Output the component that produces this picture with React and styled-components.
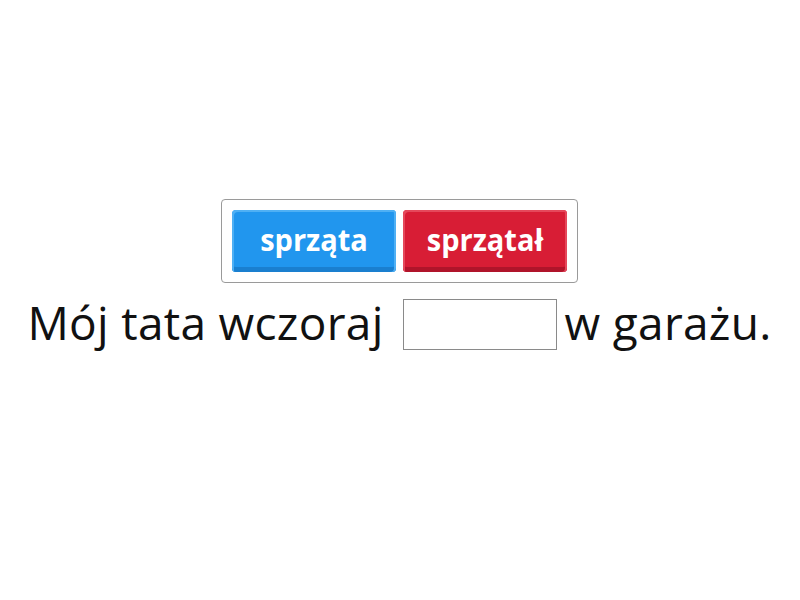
import React from "react";
import styled, { createGlobalStyle } from "styled-components";

const Global = createGlobalStyle`
  html, body { margin: 0; padding: 0; background: #fff; }
  body { font-family: "Open Sans", "Noto Sans", sans-serif; }
`;

const Page = styled.div`
  width: 800px;
  height: 600px;
  display: flex;
  flex-direction: column;
  align-items: center;
  padding-top: 199px;
  box-sizing: border-box;
`;

const Options = styled.div`
  display: flex;
  gap: 7px;
  padding: 10px;
  border: 1px solid #9a9a9a;
  border-radius: 4px;
  margin-left: -1px;
`;

const Choice = styled.button`
  width: 164px;
  height: 62px;
  border: none;
  border-radius: 4px;
  padding: 0 0 6px;
  font-family: "Open Sans", sans-serif;
  font-weight: 700;
  font-size: 29px;
  color: #fff;
  cursor: pointer;
  background: ${(p) => p.$bg};
  box-shadow: inset 2px 2px 0 ${(p) => p.$light}, inset -2px 0 0 ${(p) => p.$light},
    inset 0 -5px 0 ${(p) => p.$dark};
`;

const Label = styled.span`
  display: inline-block;
  transform: scaleY(1.07);
`;

const Sentence = styled.div`
  margin-top: 8px;
  font-size: 46px;
  letter-spacing: 0.3px;
  line-height: 62px;
  color: #111;
  white-space: nowrap;
  display: flex;
  align-items: center;
  margin-left: -1px;
`;

const Blank = styled.span`
  display: inline-block;
  width: 152px;
  height: 49px;
  border: 1px solid #8a8a8a;
  margin: 0 8px 0 19px;
  position: relative;
  top: 2px;
`;

export default function App() {
  return (
    <>
      <Global />
      <Page>
        <Options>
          <Choice $bg="#2196ee" $light="#4fb0f4" $dark="#1a7fcf">
            <Label>sprząta</Label>
          </Choice>
          <Choice $bg="#d81d35" $light="#e5485b" $dark="#b0142a">
            <Label>sprzątał</Label>
          </Choice>
        </Options>
        <Sentence>
          <span>Mój tata wczoraj</span>
          <Blank />
          <span>w garażu.</span>
        </Sentence>
      </Page>
    </>
  );
}
